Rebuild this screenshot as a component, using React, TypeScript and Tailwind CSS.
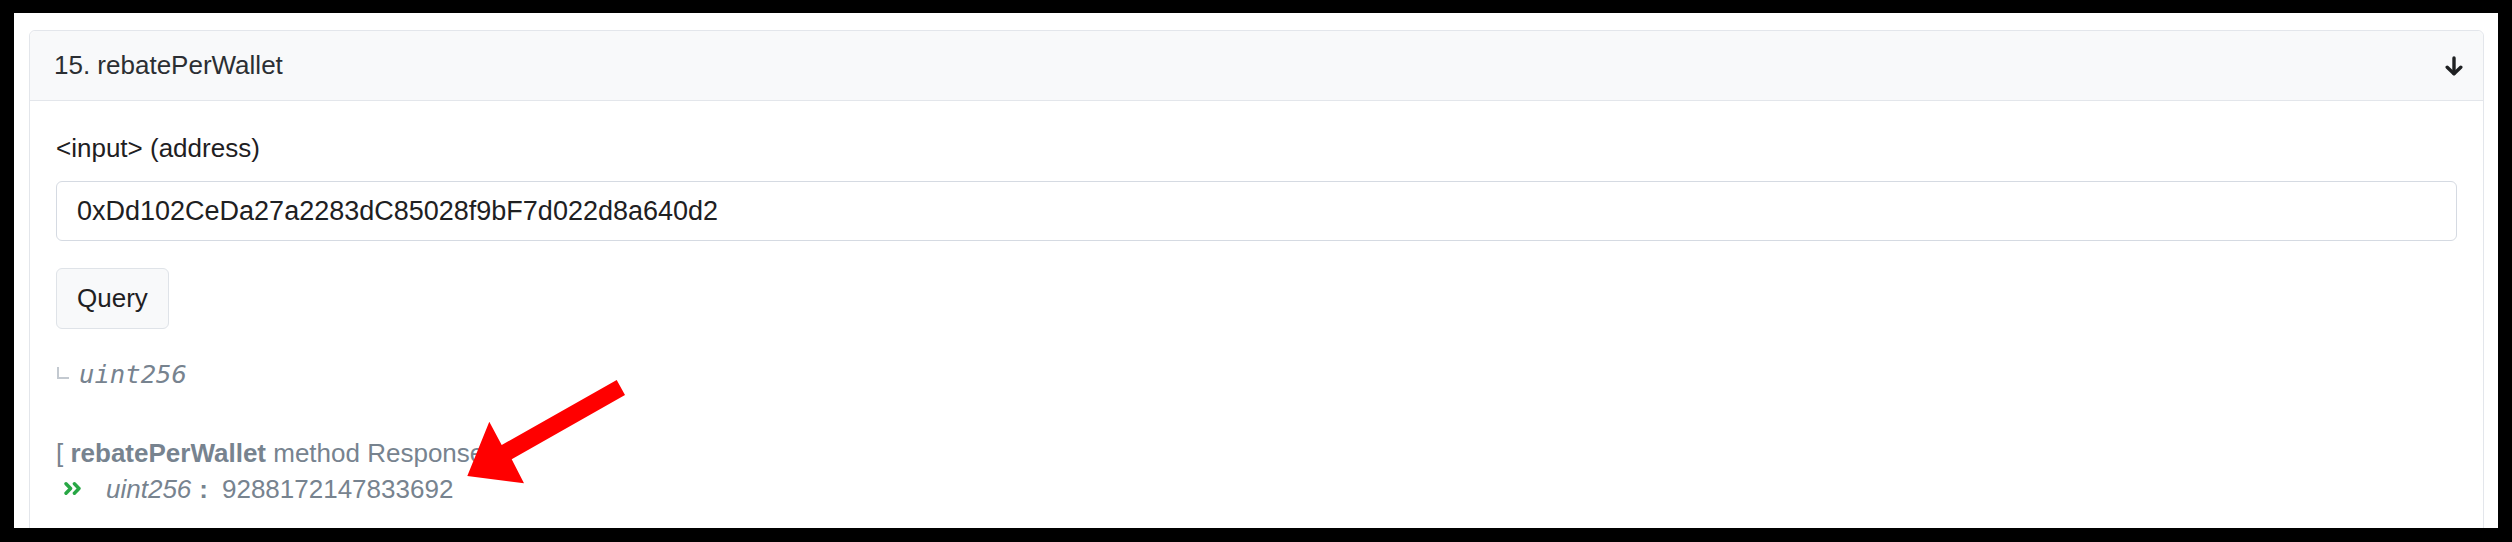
import React from "react";

function ArrowDownIcon() {
  return (
    <svg width="18" height="20" viewBox="0 0 18 20" fill="none" stroke="#1e2022" strokeWidth="3.4" strokeLinecap="round" strokeLinejoin="round">
      <path d="M9 2v15.5" />
      <path d="M2.2 11.2L9 17.8l6.8-6.6" />
    </svg>
  );
}

function DoubleChevron() {
  return (
    <svg width="18" height="13" viewBox="0 0 18 13" fill="none" stroke="#28a745" strokeWidth="3.4" strokeLinecap="round" strokeLinejoin="round">
      <path d="M2 1.8l4.6 4.7L2 11.2" />
      <path d="M10.4 1.8l4.6 4.7-4.6 4.7" />
    </svg>
  );
}

export default function App() {
  return (
    <div className="relative h-[542px] w-[2512px] bg-black pt-[13px] pl-[14px] pr-[14px] pb-[14px] font-['Liberation_Sans',Arial,sans-serif] text-[26px]">
      <div className="h-full overflow-hidden bg-white pt-[17px] pl-[15px] pr-[14px]">
        <div className="rounded-[6px] border border-[#e3e6eb]">
          <div className="flex h-[70px] items-center justify-between rounded-t-[6px] border-b border-[#e3e6eb] bg-[#f8f9fa] pl-[24px] pr-[20px] text-[#2b2f33]">
            <span>15. rebatePerWallet</span>
            <ArrowDownIcon />
          </div>

          <div className="px-[26px] pt-[28px] pb-[30px]">
            <div className="leading-[38.4px] text-[#1e2022]">&lt;input&gt; (address)</div>

            <div className="mt-[14px] flex h-[60px] items-center rounded-[6px] border border-[#d5dae2] px-[20px] text-[27px] text-[#1e2022]">
              0xDd102CeDa27a2283dC85028f9bF7d022d8a640d2
            </div>

            <button className="mt-[27px] block h-[61px] rounded-[6px] border border-[#dfe3e8] bg-[#f8f9fa] px-[20px] text-[#1e2022]">
              Query
            </button>

            <div className="mt-[26px] flex items-center leading-[38.4px]">
              <span className="ml-[1px] mb-[3px] inline-block h-[12px] w-[12px] border-b-2 border-l-2 border-[#c3c9d0]" />
              <span className="ml-[10px] font-['DejaVu_Sans_Mono',monospace] text-[25.6px] italic text-[#77838f]">uint256</span>
            </div>

            <div className="mt-[41px] leading-[36px] text-[#77838f]">
              [ <b>rebatePerWallet</b> method Response ]
            </div>
            <div className="flex items-center leading-[36px] text-[#77838f]">
              <span className="ml-[8px] flex items-center">
                <DoubleChevron />
              </span>
              <span className="ml-[24px] italic">uint256</span>
              <span className="ml-[8px] font-bold">:</span>
              <span className="ml-[14px]">9288172147833692</span>
            </div>
          </div>
        </div>
      </div>

      <svg className="pointer-events-none absolute left-0 top-0" width="2512" height="542" viewBox="0 0 2512 542">
        <polygon
          fill="#ff0000"
          points="616.7,380 501.7,445 489.3,421.7 467.3,476 524,483.3 511.7,459.3 625,395"
        />
      </svg>
    </div>
  );
}
